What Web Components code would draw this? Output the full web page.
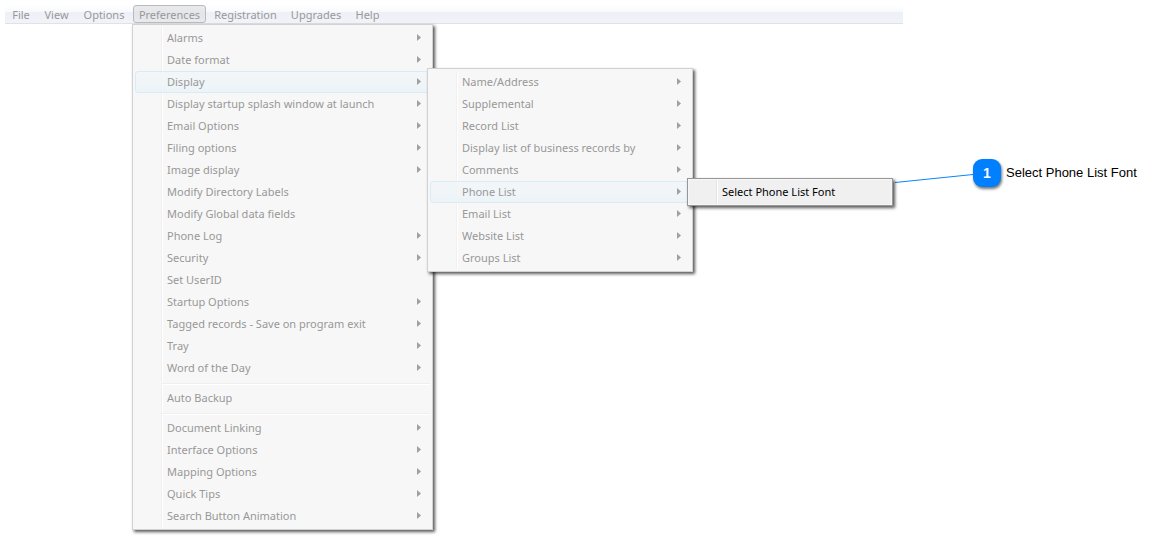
<!DOCTYPE html>
<html lang="en">
<head>
<meta charset="utf-8">
<title>Preferences menu</title>
<style>
  body {
    box-sizing: border-box;
    min-height: 100vh;
    margin: 0;
    padding: 5px;
    background: #fff;
    font-family: "Noto Sans", "Open Sans", sans-serif;
    font-size: 11px;
    line-height: 16px;
    color: #989898;
  }
</style>
</head>
<body>
<menu-bar>
  <menu-title>File</menu-title>
  <menu-title>View</menu-title>
  <menu-title>Options</menu-title>
  <menu-title open>Preferences
    <menu-panel slot="menu" size="large">
      <menu-item more>Alarms</menu-item>
      <menu-item more>Date format</menu-item>
      <menu-item more active>Display
        <menu-panel slot="submenu" size="medium">
          <menu-item more>Name/Address</menu-item>
          <menu-item more>Supplemental</menu-item>
          <menu-item more>Record List</menu-item>
          <menu-item more>Display list of business records by</menu-item>
          <menu-item more>Comments</menu-item>
          <menu-item more active>Phone List
            <menu-panel slot="submenu" size="small" current>
              <menu-item>Select Phone List Font</menu-item>
            </menu-panel>
          </menu-item>
          <menu-item more>Email List</menu-item>
          <menu-item more>Website List</menu-item>
          <menu-item more>Groups List</menu-item>
        </menu-panel>
      </menu-item>
      <menu-item more>Display startup splash window at launch</menu-item>
      <menu-item more>Email Options</menu-item>
      <menu-item more>Filing options</menu-item>
      <menu-item more>Image display</menu-item>
      <menu-item>Modify Directory Labels</menu-item>
      <menu-item>Modify Global data fields</menu-item>
      <menu-item more>Phone Log</menu-item>
      <menu-item more>Security</menu-item>
      <menu-item>Set UserID</menu-item>
      <menu-item more>Startup Options</menu-item>
      <menu-item more>Tagged records - Save on program exit</menu-item>
      <menu-item more>Tray</menu-item>
      <menu-item more>Word of the Day</menu-item>
      <menu-separator></menu-separator>
      <menu-item>Auto Backup</menu-item>
      <menu-separator></menu-separator>
      <menu-item more>Document Linking</menu-item>
      <menu-item more>Interface Options</menu-item>
      <menu-item more>Mapping Options</menu-item>
      <menu-item more>Quick Tips</menu-item>
      <menu-item more>Search Button Animation</menu-item>
    </menu-panel>
  </menu-title>
  <menu-title>Registration</menu-title>
  <menu-title>Upgrades</menu-title>
  <menu-title>Help</menu-title>
</menu-bar>
<callout-note number="1">Select Phone List Font</callout-note>

<script>
class MenuBar extends HTMLElement {
  static get style() {
    return /*css*/`
      :host {
        display: block;
        margin-right: 247px;
      }
      nav {
        display: grid;
        grid-template-columns: 32px 39px 56px 75px 77px 64px 39px;
        height: 18px;
        border-bottom: 1px solid #e2e1e6;
        background: linear-gradient(#fff, #f7f9fc 7px, #edf0f7 7px, #f1f3f9);
      }
    `
  }
  constructor() {
    super();
    this.attachShadow({ mode: 'open' })
    this.shadowRoot.innerHTML = /*html*/`
      <style>${MenuBar.style}</style>
      <nav aria-label="Main menu"><slot></slot></nav>
    `
  }
}

class MenuTitle extends HTMLElement {
  static get style() {
    return /*css*/`
      :host {
        display: block;
        position: relative;
      }
      button {
        display: block;
        box-sizing: border-box;
        width: calc(100% - 2px);
        height: 18px;
        margin: 0 1px;
        padding: 0;
        border: 1px solid transparent;
        border-radius: 3px;
        background: none;
        color: inherit;
        font: inherit;
        line-height: 18px;
        white-space: nowrap;
      }
      :host([open]) button {
        border-color: #b9babd;
        background: linear-gradient(#e9eaec, #e3e5e9 50%, #e8eaee);
      }
      slot[name="menu"] {
        display: block;
        position: absolute;
        top: 19px;
        left: 0;
        z-index: 1;
      }
    `
  }
  constructor() {
    super();
    this.attachShadow({ mode: 'open' })
    this.shadowRoot.innerHTML = /*html*/`
      <style>${MenuTitle.style}</style>
      <button type="button"><slot></slot></button>
      <slot name="menu"></slot>
    `
  }
}

class MenuPanel extends HTMLElement {
  static get style() {
    return /*css*/`
      :host {
        display: block;
        box-sizing: border-box;
        padding: 2px;
        border: 1px solid #d2d2d2;
        background:
          linear-gradient(90deg, #f0f0f0 1px, #fff 1px) 28px 2px / 2px calc(100% - 4px) no-repeat,
          #f7f7f7;
        box-shadow: 2px 2px 3px rgba(0, 0, 0, 0.65);
      }
      :host([size="large"]) { width: 301px; }
      :host([size="medium"]) { width: 266px; }
      :host([size="small"]) { width: 206px; }
      :host([current]) {
        border-color: #979797;
        background:
          linear-gradient(90deg, #e2e3e3 1px, #fff 1px) 28px 2px / 2px calc(100% - 4px) no-repeat,
          #f0f0f0;
        color: #000;
        box-shadow: inset 0 0 0 1px #f6f6f6, 2px 2px 3px rgba(0, 0, 0, 0.65);
      }
    `
  }
  constructor() {
    super();
    this.attachShadow({ mode: 'open' })
    this.shadowRoot.innerHTML = /*html*/`
      <style>${MenuPanel.style}</style>
      <slot></slot>
    `
  }
}

class MenuItem extends HTMLElement {
  static get style() {
    return /*css*/`
      :host {
        display: block;
        position: relative;
      }
      button {
        display: flex;
        box-sizing: border-box;
        align-items: center;
        justify-content: space-between;
        width: 100%;
        height: 22px;
        padding: 0 8px 0 31px;
        border: 1px solid transparent;
        border-radius: 3px;
        background: none;
        color: inherit;
        font: inherit;
        text-align: left;
        white-space: nowrap;
      }
      :host([active]) button {
        border-color: #d9ecf5;
        background: linear-gradient(rgba(242, 246, 249, 0.8), rgba(234, 243, 248, 0.8));
      }
      svg {
        display: none;
        width: 4px;
        height: 8px;
        fill: #a0a0a0;
      }
      :host([more]) svg { display: block; }
      slot[name="submenu"] {
        display: block;
        position: absolute;
        top: -3px;
        left: calc(100% - 3px);
        z-index: 1;
      }
    `
  }
  constructor() {
    super();
    this.attachShadow({ mode: 'open' })
    this.shadowRoot.innerHTML = /*html*/`
      <style>${MenuItem.style}</style>
      <button type="button">
        <span><slot></slot></span>
        <svg viewBox="0 0 4 8" aria-hidden="true"><path d="M0 0L4 3.5L0 7Z"/></svg>
      </button>
      <slot name="submenu"></slot>
    `
  }
}

class MenuSeparator extends HTMLElement {
  static get style() {
    return /*css*/`
      :host {
        display: block;
        padding: 4px 0 2px 27px;
      }
      hr {
        height: 1px;
        margin: 0;
        border: 0;
        border-bottom: 1px solid #fff;
        background: #efefef;
      }
    `
  }
  constructor() {
    super();
    this.attachShadow({ mode: 'open' })
    this.shadowRoot.innerHTML = /*html*/`
      <style>${MenuSeparator.style}</style>
      <hr>
    `
  }
}

class CalloutNote extends HTMLElement {
  static get style() {
    return /*css*/`
      :host {
        display: flex;
        position: absolute;
        top: 159px;
        left: 895px;
        align-items: center;
        color: #000;
        font-family: "Liberation Sans", Arial, sans-serif;
        font-size: 13px;
        white-space: nowrap;
      }
      svg {
        width: 78px;
        height: 28px;
        stroke: #0a84ff;
      }
      b {
        width: 28px;
        margin-right: 5px;
        border-radius: 9px;
        background: #0080ff;
        box-shadow: 1px 2px 3px rgba(0, 0, 0, 0.55);
        color: #fff;
        font-size: 14px;
        line-height: 28px;
        text-align: center;
      }
    `
  }
  constructor() {
    super();
    this.attachShadow({ mode: 'open' })
    this.shadowRoot.innerHTML = /*html*/`
      <style>${CalloutNote.style}</style>
      <svg viewBox="0 0 78 28" aria-hidden="true"><path d="M0 23.5L78 15.5"/></svg>
      <b>${this.getAttribute('number')}</b>
      <span><slot></slot></span>
    `
  }
}

customElements.define('menu-bar', MenuBar)
customElements.define('menu-title', MenuTitle)
customElements.define('menu-panel', MenuPanel)
customElements.define('menu-item', MenuItem)
customElements.define('menu-separator', MenuSeparator)
customElements.define('callout-note', CalloutNote)
</script>
</body>
</html>
